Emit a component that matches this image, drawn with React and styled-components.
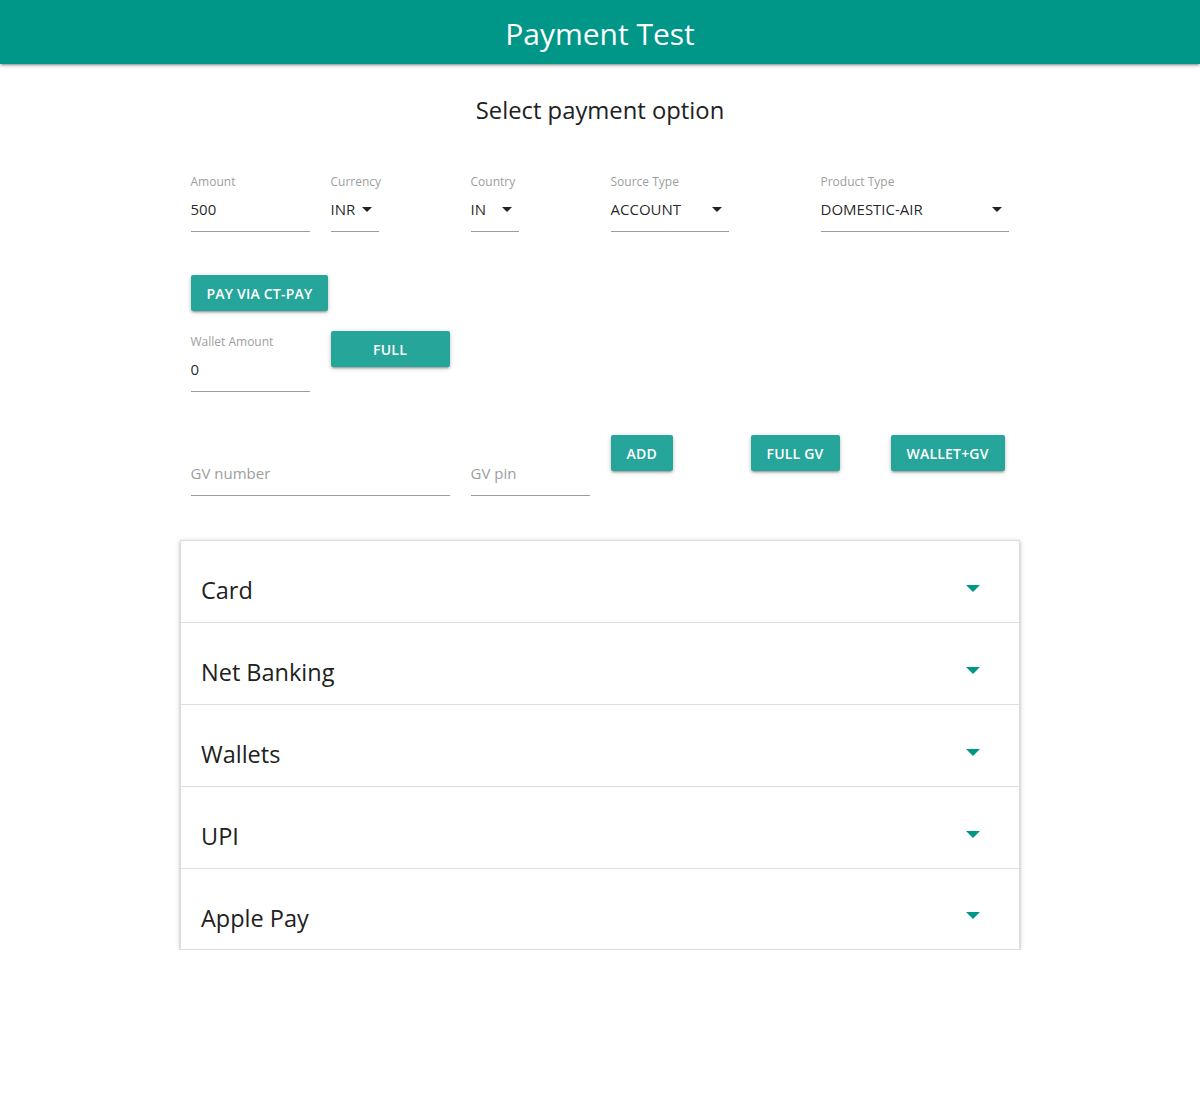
import React from "react"
import styled, { createGlobalStyle } from "styled-components"

const GlobalStyle = createGlobalStyle`
  body {
    margin: 0;
    background: #fff;
    font-family: "Open Sans", "Noto Sans", sans-serif;
    color: rgba(0, 0, 0, 0.87);
  }
  * { box-sizing: border-box; }
`

const Header = styled.header`
  height: 64px;
  background: #009688;
  display: flex;
  align-items: center;
  justify-content: center;
  box-shadow: 0 2px 2px 0 rgba(0, 0, 0, 0.14), 0 3px 1px -2px rgba(0, 0, 0, 0.12),
    0 1px 5px 0 rgba(0, 0, 0, 0.2);
  h1 {
    margin: 0;
    padding-top: 4px;
    color: #fff;
    font-weight: 400;
    font-size: 30px;
    line-height: 60px;
  }
`

const Container = styled.main`
  width: 840px;
  margin: 0 auto;
`

const Title = styled.h2`
  margin: 30px 0 0;
  text-align: center;
  font-weight: 400;
  font-size: 23.8px;
  line-height: 32px;
  color: #212121;
`

const Row = styled.div`
  display: grid;
  grid-template-columns: repeat(12, 70px);
  align-items: start;
  margin-top: ${(p) => p.$top || 0}px;
`

const Col = styled.div`
  grid-column: ${(p) => p.$start} / span ${(p) => p.$span || 2};
  padding: 0 10.5px;
  display: flex;
  align-items: flex-start;
`

const Field = styled.div`
  position: relative;
  width: ${(p) => (p.$auto ? "auto" : "100%")};
  padding-top: ${(p) => p.$pad || 0}px;
`

const Label = styled.label`
  display: block;
  font-size: 12px;
  line-height: 16px;
  color: #9e9e9e;
`

const Input = styled.input`
  display: block;
  width: 100%;
  height: 42px;
  padding: 0 0 3px;
  border: none;
  border-bottom: 1px solid #9e9e9e;
  outline: none;
  background: transparent;
  font-family: inherit;
  font-size: 15px;
  color: rgba(0, 0, 0, 0.87);
  &::placeholder {
    color: #9e9e9e;
  }
`

const SelectBox = styled.div`
  position: relative;
  height: 42px;
  padding-bottom: 3px;
  width: ${(p) => p.$width}px;
  border-bottom: 1px solid #9e9e9e;
  display: flex;
  align-items: center;
  font-size: 15px;
  color: rgba(0, 0, 0, 0.87);
`

const Caret = styled.span`
  position: absolute;
  right: 7px;
  top: 17px;
  width: 0;
  height: 0;
  border-left: 5px solid transparent;
  border-right: 5px solid transparent;
  border-top: 5px solid #222;
`

const Button = styled.button`
  height: 36px;
  padding: 0 16px;
  width: ${(p) => (p.$full ? "100%" : "auto")};
  border: none;
  border-radius: 2px;
  background: #26a69a;
  color: #fff;
  font-family: inherit;
  font-size: 14px;
  font-weight: 600;
  letter-spacing: 0.2px;
  text-transform: uppercase;
  white-space: nowrap;
  box-shadow: 0 2px 2px 0 rgba(0, 0, 0, 0.14), 0 3px 1px -2px rgba(0, 0, 0, 0.12),
    0 1px 5px 0 rgba(0, 0, 0, 0.2);
  cursor: pointer;
`

const Collapsible = styled.ul`
  list-style: none;
  margin: 44px 0 0;
  padding: 0;
  border: 1px solid #ddd;
  box-shadow: 0 2px 2px 0 rgba(0, 0, 0, 0.14), 0 3px 1px -2px rgba(0, 0, 0, 0.12),
    0 1px 5px 0 rgba(0, 0, 0, 0.2);
`

const Item = styled.li`
  display: flex;
  align-items: center;
  justify-content: space-between;
  height: 82px;
  padding: 17px 39px 0 20px;
  border-bottom: 1px solid #ddd;
  font-size: 23.5px;
  color: #212121;
  cursor: pointer;
  &:last-child {
    border-bottom: none;
    height: 80px;
  }
`

const Arrow = styled.span`
  width: 0;
  height: 0;
  margin-top: -4px;
  border-left: 7px solid transparent;
  border-right: 7px solid transparent;
  border-top: 7px solid #009688;
`

const Select = ({ label, value, width }) => (
  <Field $auto>
    <Label>{label}</Label>
    <SelectBox $width={width}>
      {value}
      <Caret />
    </SelectBox>
  </Field>
)

const methods = ["Card", "Net Banking", "Wallets", "UPI", "Apple Pay"]

const App = () => (
  <>
    <GlobalStyle />
    <Header>
      <h1>Payment Test</h1>
    </Header>
    <Container>
      <Title>Select payment option</Title>

      <Row $top={48}>
        <Col $start={1}>
          <Field>
            <Label>Amount</Label>
            <Input defaultValue="500" />
          </Field>
        </Col>
        <Col $start={3}>
          <Select label="Currency" value="INR" width={48} />
        </Col>
        <Col $start={5}>
          <Select label="Country" value="IN" width={48} />
        </Col>
        <Col $start={7}>
          <Select label="Source Type" value="ACCOUNT" width={118} />
        </Col>
        <Col $start={10} $span={3}>
          <Select label="Product Type" value="DOMESTIC-AIR" width={188} />
        </Col>
      </Row>

      <Row $top={43}>
        <Col $start={1} $span={4}>
          <Button>Pay via CT-Pay</Button>
        </Col>
      </Row>

      <Row $top={20}>
        <Col $start={1}>
          <Field $pad={3}>
            <Label>Wallet Amount</Label>
            <Input defaultValue="0" />
          </Field>
        </Col>
        <Col $start={3}>
          <Button $full>Full</Button>
        </Col>
      </Row>

      <Row $top={43}>
        <Col $start={1} $span={4}>
          <Field $pad={19}>
            <Input placeholder="GV number" />
          </Field>
        </Col>
        <Col $start={5}>
          <Field $pad={19}>
            <Input placeholder="GV pin" />
          </Field>
        </Col>
        <Col $start={7}>
          <Button>Add</Button>
        </Col>
        <Col $start={9}>
          <Button>Full GV</Button>
        </Col>
        <Col $start={11}>
          <Button>Wallet+GV</Button>
        </Col>
      </Row>

      <Collapsible>
        {methods.map((m) => (
          <Item key={m}>
            {m}
            <Arrow />
          </Item>
        ))}
      </Collapsible>
    </Container>
  </>
)

export default App
